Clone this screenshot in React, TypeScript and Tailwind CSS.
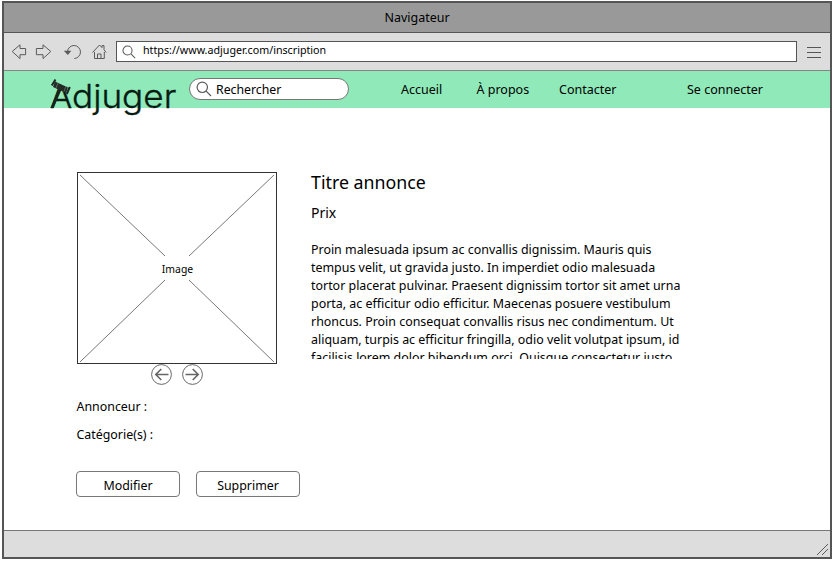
import React from "react";

const ink = "#5a5a5a";

function Search({ className }: { className: string }) {
  return (
    <svg className={className} viewBox="0 0 16 16" fill="none" stroke={ink} strokeWidth="1.2">
      <circle cx="6.3" cy="6.3" r="5.2" />
      <path d="M10.2 10.2 15 15" />
    </svg>
  );
}

function Line({ text, className = "" }: { text: string; className?: string }) {
  return <div className={"whitespace-nowrap " + className}>{text}</div>;
}

function CircleArrow({ right = false }: { right?: boolean }) {
  return (
    <svg className={right ? "size-[21px] rotate-180" : "size-[21px]"} viewBox="0 0 21 21" fill="none" stroke="#666">
      <circle cx="10.5" cy="10.5" r="9.9" strokeWidth="1" />
      <path d="M17.5 10.5H4.8M10.300 5 4.800 10.500l5.500 5.500" strokeWidth="1.6" />
    </svg>
  );
}

export default function App() {
  return (
    <div className="h-[562px] w-[835px] overflow-hidden bg-white pt-px pl-[2px] font-['Noto_Sans',sans-serif] text-[13px] text-black">
      <div className="flex h-[558px] w-[830px] flex-col border-2 border-[#555] bg-white">
        <div className="flex h-[30px] shrink-0 items-center justify-center border-b border-[#555] bg-[#999] pt-[2px]">
          <span className="text-[12.5px]">Navigateur</span>
        </div>
        <div className="flex h-[38px] shrink-0 items-start border-b border-[#858585] bg-[#ddd] pt-2">
          <svg className="h-5 w-[112px] shrink-0" viewBox="4 41 112 20" fill="none" stroke={ink} strokeWidth="1">
            <path d="M12.2 51.5 20 44.8v3.7h5.6v6.2H20v3.9z" />
            <path d="M50.8 51.5 43 44.8v3.7h-6.6v6.2H43v3.9z" />
            <path d="M67.5 51.5a6.5 6.5 0 1 1 6.800 7" />
            <path d="M63.8 50.8h7.600l-3.600 4.200z" fill={ink} stroke="none" />
            <path d="M92.5 52.5 99.5 45l2.500 2.600v-2h2v4l2 2.900M94.500 52v6.500h9.800V52M97.500 58.500v-4.500h3.500v4.500" />
          </svg>
          <div className="flex h-[21px] w-[681px] shrink-0 items-center border border-[#555] bg-white pl-[5px]">
            <Search className="size-[14px]" />
            <span className="ml-[7px] pb-[2px] text-[10.7px]">https://www.adjuger.com/inscription</span>
          </div>
          <div className="mt-[6px] ml-[10px] flex flex-col gap-1">
            <div className="h-px w-[14px] bg-[#555]" />
            <div className="h-px w-[14px] bg-[#555]" />
            <div className="h-px w-[14px] bg-[#555]" />
          </div>
        </div>
        <header className="flex h-[37px] shrink-0 bg-[#8fe9b9] pl-[46px]">
          <div className="relative h-[37px] w-[139px] shrink-0">
            <div className="flex items-baseline whitespace-nowrap pt-[3px] font-['Inter',sans-serif] text-[33px] leading-[44px] font-light text-[#061b12] [-webkit-text-stroke:0.35px_#061b12]">
              <span className="w-[22px]">A</span>
              <span className="origin-left scale-x-[1.065]">djuger</span>
            </div>
            <svg className="absolute top-[7px] left-0 h-[30px] w-6" viewBox="50 78 24 30">
              <path d="M50 78h20l-2 14.500-4-1-12-5z" fill="#8fe9b9" />
              <path d="m59 87 3 1.500-8.500 19.500h-3z" fill="#16231c" />
              <path d="m55 81.500 13 6-2 5.500-13-6z" fill="#222b26" />
              <path d="m55.500 79.500-3.700 6M69.800 87l-3 7" stroke="#1d2521" strokeWidth="2" />
              <path d="m58 83-2 5M66 86.500l-2 5" stroke="#71877b" strokeWidth=".7" />
            </svg>
          </div>
          <div className="mt-[7px] flex h-[22px] w-[160px] shrink-0 items-center rounded-full border border-[#777] bg-white pl-[6px]">
            <Search className="size-4" />
            <span className="ml-1 pt-[2px] text-[12.3px]">Rechercher</span>
          </div>
          <nav className="flex items-start pt-[9px] pl-[52px] text-[12.5px] leading-5">
            <Line className="w-[75.500px]" text="Accueil" />
            <Line className="w-[82.500px]" text="À propos" />
            <Line className="w-[128px]" text="Contacter" />
            <Line text="Se connecter" />
          </nav>
        </header>
        <main className="flex min-h-0 flex-1 pt-[64px] pl-[72px]">
          <section className="w-[235px] shrink-0">
            <svg className="ml-px block h-[192px] w-[200px]" viewBox="0 0 200 192" fill="none" stroke="#333">
              <rect x=".5" y=".5" width="199" height="191" />
              <path d="m3 3 85 81M197 3l-85 81M3 190l85-82M197 190l-85-82" strokeWidth=".8" stroke="#555" />
              <text x="100.5" y="101" textAnchor="middle" fontSize="10.4" fill="#000" stroke="none">Image</text>
            </svg>
            <div className="flex gap-[10px] pl-[75px]">
              <CircleArrow />
              <CircleArrow right />
            </div>
            <div className="mt-[8px] pl-[0.5px] text-[12.4px] leading-[28px]">
              <p>Annonceur :</p>
              <p>Catégorie(s) :</p>
            </div>
            <div className="mt-[22px] flex w-[224px] gap-4 text-[12.4px]">
              <button className="h-[26px] w-[104px] shrink-0 rounded-[4px] border border-[#777] pt-[3px] leading-5">Modifier</button>
              <button className="h-[26px] w-[104px] shrink-0 rounded-[4px] border border-[#777] pt-[3px] leading-5">Supprimer</button>
            </div>
          </section>
          <article className="w-[380px]">
            <h1 className="text-[17.8px] leading-5">Titre annonce</h1>
            <p className="mt-[11px] text-[14px] leading-5">Prix</p>
            <div className="mt-[18px] h-[118px] overflow-hidden text-[12.43px] leading-[18px]">
              <Line text="Proin malesuada ipsum ac convallis dignissim. Mauris quis" />
              <Line text="tempus velit, ut gravida justo. In imperdiet odio malesuada" />
              <Line text="tortor placerat pulvinar. Praesent dignissim tortor sit amet urna" />
              <Line text="porta, ac efficitur odio efficitur. Maecenas posuere vestibulum" />
              <Line text="rhoncus. Proin consequat convallis risus nec condimentum. Ut" />
              <Line text="aliquam, turpis ac efficitur fringilla, odio velit volutpat ipsum, id" />
              <Line text="facilisis lorem dolor bibendum orci. Quisque consectetur justo" />
            </div>
          </article>
        </main>
        <footer className="flex h-[27px] shrink-0 items-end justify-end border-t border-[#777] bg-[#ddd] p-px">
          <svg className="size-3" viewBox="0 0 12 12" stroke={ink}><path d="M0 11 11 0M5 11l6-6" /></svg>
        </footer>
      </div>
    </div>
  );
}
